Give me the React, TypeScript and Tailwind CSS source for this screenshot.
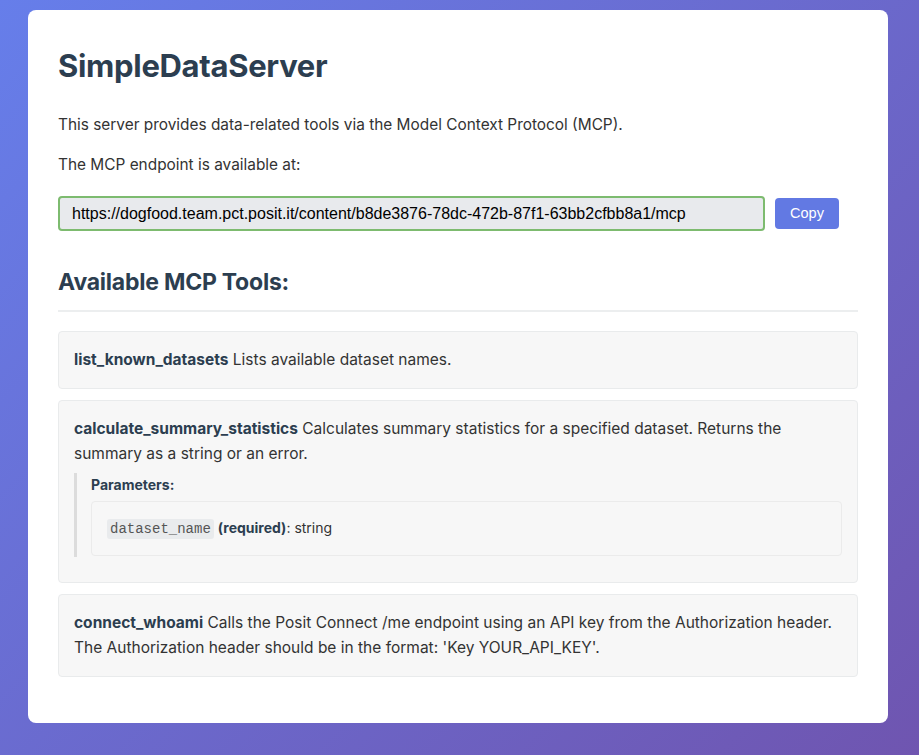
import React from 'react';

type Param = { name: string; required: boolean; type: string };
type Tool = { name: string; description: string; params?: Param[] };

const tools: Tool[] = [
  { name: 'list_known_datasets', description: 'Lists available dataset names.' },
  {
    name: 'calculate_summary_statistics',
    description: 'Calculates summary statistics for a specified dataset. Returns the summary as a string or an error.',
    params: [{ name: 'dataset_name', required: true, type: 'string' }],
  },
  {
    name: 'connect_whoami',
    description:
      "Calls the Posit Connect /me endpoint using an API key from the Authorization header. The Authorization header should be in the format: 'Key YOUR_API_KEY'.",
  },
];

const endpoint = 'https://dogfood.team.pct.posit.it/content/b8de3876-78dc-472b-87f1-63bb2cfbb8a1/mcp';

export default function App() {
  return (
    <div className="min-h-screen bg-[linear-gradient(135deg,#667eea_0%,#6f55b0_100%)] pt-[10px] pb-[32px] font-['Inter','Noto_Sans',sans-serif] text-[#333]">
      <div className="ml-[28px] w-[860px] rounded-[8px] bg-white px-[30px] pt-[36px] pb-[30px]">
        {/* Encabezado */}
        <h1 className="text-[31px] font-bold leading-[40px] text-[#2c3e50] tracking-[-0.01em]">SimpleDataServer</h1>
        <p className="mt-[27px] text-[15.4px] leading-[24px]">
          This server provides data-related tools via the Model Context Protocol (MCP).
        </p>
        <p className="mt-[16px] text-[15.4px] leading-[24px]">The MCP endpoint is available at:</p>

        {/* Endpoint */}
        <div className="mt-[19px] flex items-center gap-[10px]">
          <div className="flex h-[35px] w-[707px] items-center rounded-[4px] border-2 border-[#7dbb6f] bg-[#e8eaed] px-[12px] font-['Liberation_Sans',Arial,sans-serif] text-[16px] text-black">
            {endpoint}
          </div>
          <button className="h-[31px] w-[64px] rounded-[4px] bg-[#6279e3] font-['Liberation_Sans',Arial,sans-serif] text-[14.5px] text-white">
            Copy
          </button>
        </div>

        {/* Herramientas */}
        <h2 className="mt-[36px] border-b-2 border-[#eceeef] pb-[13px] text-[23px] font-bold leading-[30px] text-[#2c3e50] tracking-[-0.01em]">
          Available MCP Tools:
        </h2>

        <div className="mt-[19px] flex flex-col gap-[11px]">
          {tools.map((t) => (
            <div key={t.name} className="rounded-[4px] border border-[#e9ebec] bg-[#f7f7f7] px-[15px] py-[15px] text-[15.5px] leading-[25.6px]">
              <p>
                <strong className="font-bold text-[#2c3e50]">{t.name}</strong> {t.description}
              </p>
              {t.params && (
                <div className="mt-[6px] mb-[10px] border-l-[3px] border-[#dcdcdc] pl-[14px]">
                  <div className="text-[14px] font-bold leading-[24px] text-[#2c3e50]">Parameters:</div>
                  <div className="mt-[4px] rounded-[4px] border border-[#ebebeb] bg-[#f7f7f7] px-[15px] py-[14px] text-[14px] leading-[24px]">
                    {t.params.map((p) => (
                      <div key={p.name}>
                        <code className="rounded-[3px] bg-[#e9ebed] px-[3px] py-[2px] font-['Liberation_Mono',monospace] text-[14px] text-[#555]">
                          {p.name}
                        </code>{' '}
                        {p.required && <strong className="font-bold text-[#2c3e50]">(required)</strong>}: {p.type}
                      </div>
                    ))}
                  </div>
                  <div className="h-[1px]" />
                </div>
              )}
            </div>
          ))}
        </div>
        <div className="h-[16px]" />
      </div>
    </div>
  );
}
